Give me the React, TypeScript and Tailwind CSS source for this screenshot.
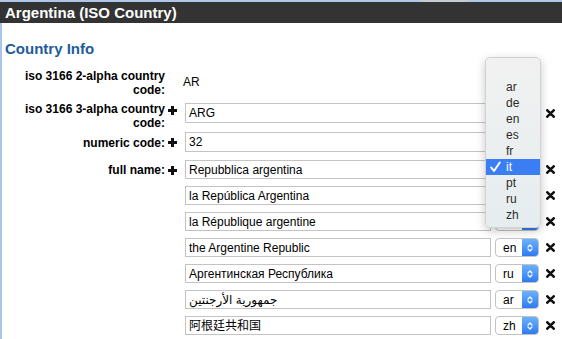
import React from "react";

const Plus = () => (
  <svg width="9" height="9" viewBox="0 0 9 9" className="block">
    <rect x="0" y="3" width="9" height="3" fill="#111" />
    <rect x="3" y="0" width="3" height="9" fill="#111" />
  </svg>
);

const Cross = () => (
  <svg width="9" height="9" viewBox="0 0 9 9" className="block">
    <path d="M1.3 1.3 L7.7 7.7 M7.7 1.3 L1.3 7.7" stroke="#111" strokeWidth="2.6" strokeLinecap="round" />
  </svg>
);

const Chevrons = () => (
  <svg width="8" height="12" viewBox="0 0 8 12" className="block">
    <path d="M2 5 L4 3 L6 5 M2 7 L4 9 L6 7" stroke="#fff" strokeWidth="1.2" fill="none" strokeLinecap="round" strokeLinejoin="round" />
  </svg>
);

const Field = ({ text, w }: { text: string; w: string }) => (
  <div className={`${w} h-full box-border border border-[#c3c3c3] bg-white pl-[3px] flex items-center whitespace-nowrap overflow-hidden`}>
    {text}
  </div>
);

const Select = ({ v }: { v: string }) => (
  <div className="ml-[4px] w-[44px] h-full box-border rounded-[4px] border border-[#c2c2c2] bg-white flex overflow-hidden">
    <div className="flex-1 pl-[7px] flex items-center">{v}</div>
    <div className="w-[16px] h-full bg-gradient-to-b from-[#6cb1fb] to-[#2d7bf1] flex items-center justify-center">
      <Chevrons />
    </div>
  </div>
);

const names: [string, string][] = [
  ["Repubblica argentina", "it"],
  ["la República Argentina", "es"],
  ["la République argentine", "fr"],
  ["the Argentine Republic", "en"],
  ["Аргентинская Республика", "ru"],
  ["جمهورية الأرجنتين", "ar"],
  ["阿根廷共和国", "zh"],
];

const langs = ["ar", "de", "en", "es", "fr", "it", "pt", "ru", "zh"];

export default function App() {
  return (
    <div className="relative w-[562px] h-[339px] overflow-hidden bg-white text-[12px] text-black font-['Liberation_Sans','DejaVu_Sans','Noto_Sans_CJK_SC',sans-serif]">
      <div className="h-[2px] bg-[#aec7e7] flex">
        <div className="ml-[419px] w-[50px] bg-[#c5cbd3]" />
      </div>
      <div className="h-[21px] bg-[#333333] pl-[5px] text-[15px] leading-[21px] font-bold text-white">
        Argentina (ISO Country)
      </div>
      <div className="h-[316px] border-l-2 border-[#a8c6ec] pl-[3px]">
        <div className="pt-[17px] text-[15px] leading-[18px] font-bold text-[#1d5c9b]">Country Info</div>

        {/* row 1 */}
        <div className="mt-[11px] flex items-start">
          <div className="w-[160px] shrink-0 text-right font-bold leading-[14px]">iso 3166 2-alpha country code:</div>
          <div className="w-[20px] shrink-0" />
          <div className="mt-[6px] ml-[-2px] leading-[14px]">AR</div>
        </div>

        {/* row 2 */}
        <div className="mt-[5px] flex items-start">
          <div className="w-[160px] shrink-0 text-right font-bold leading-[14px]">iso 3166 3-alpha country code:</div>
          <div className="w-[20px] shrink-0 pt-[4px] pl-[3px]">
            <Plus />
          </div>
          <div className="mt-[1px] h-[20px] flex items-center">
            <Field text="ARG" w="w-[355px]" />
            <div className="ml-[6px]">
              <Cross />
            </div>
          </div>
        </div>

        {/* row 3 */}
        <div className="mt-[2px] flex items-start">
          <div className="mt-[4px] w-[160px] shrink-0 text-right font-bold leading-[14px]">numeric code:</div>
          <div className="w-[20px] shrink-0 pt-[6px] pl-[3px]">
            <Plus />
          </div>
          <div className="h-[20px] flex items-center">
            <Field text="32" w="w-[355px]" />
          </div>
        </div>

        {/* row 4 */}
        <div className="mt-[8px] flex items-start">
          <div className="mt-[3px] w-[160px] shrink-0 text-right font-bold leading-[14px]">full name:</div>
          <div className="w-[20px] shrink-0 pt-[6px] pl-[3px]">
            <Plus />
          </div>
          <div className="flex flex-col gap-[7px]">
            {names.map(([t, l]) => (
              <div key={l} className="h-[19px] flex items-center">
                <Field text={t} w="w-[306px]" />
                <Select v={l} />
                <div className="ml-[7px]">
                  <Cross />
                </div>
              </div>
            ))}
          </div>
        </div>
      </div>

      {/* dropdown menu */}
      <div className="absolute left-[485px] top-[57px] w-[56px] h-[171px] box-border rounded-[5px] border border-[#d2d2d2] bg-gradient-to-b from-[#f1f1f1] to-[#e6edef] shadow-[0_3px_10px_rgba(0,0,0,0.22)] pt-[21px] overflow-hidden">
        {langs.map((l) => (
          <div
            key={l}
            className={`relative h-[16px] leading-[16px] pl-[20px] ${l === "it" ? "bg-[#3b7ef3] text-white" : "text-[#2a2a2a]"}`}
          >
            {l === "it" && (
              <svg width="11" height="12" viewBox="0 0 11 12" className="absolute left-[4px] top-[2px]">
                <path d="M1.2 6.5 L4 10 L9.8 1.5" stroke="#fff" strokeWidth="2" fill="none" strokeLinecap="round" strokeLinejoin="round" />
              </svg>
            )}
            {l}
          </div>
        ))}
      </div>
    </div>
  );
}
